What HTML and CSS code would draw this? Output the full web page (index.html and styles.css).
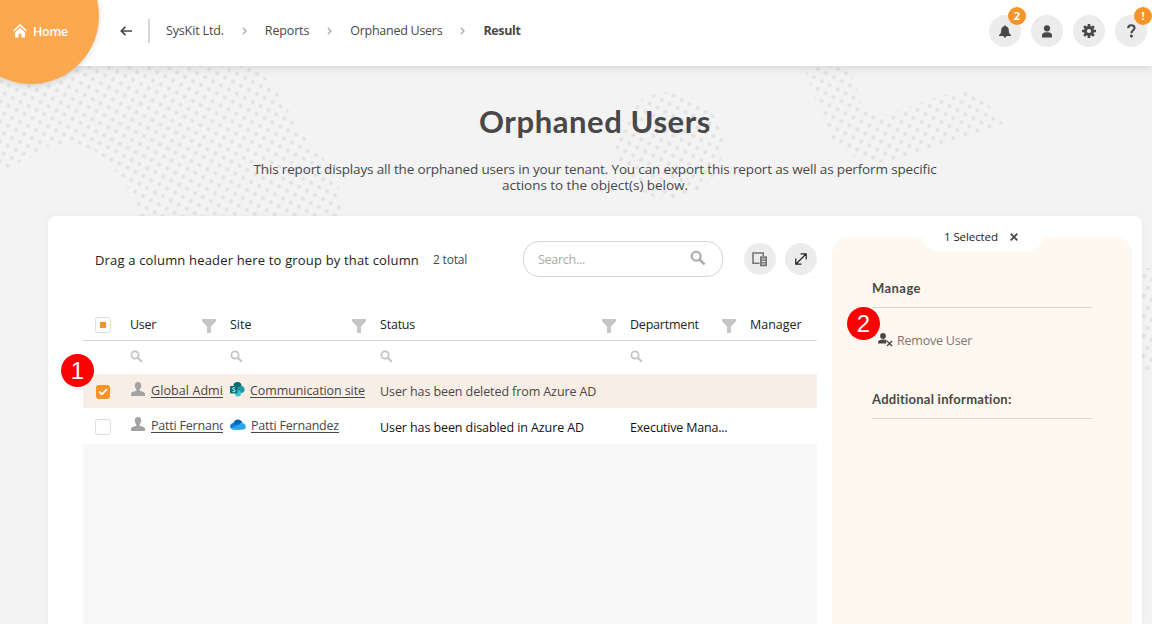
FILE: index.html
```html
<!DOCTYPE html>
<html lang="en">
<head>
<meta charset="utf-8">
<title>Orphaned Users</title>
<link rel="stylesheet" href="styles.css">
</head>
<body>
<svg class="defs" width="0" height="0" aria-hidden="true">
  <symbol id="search" viewBox="0 0 14 14"><circle cx="5.4" cy="5.4" r="3.9" fill="none" stroke="currentColor" stroke-width="1.9"/><path d="M8.3 8.3L12.8 12.6" stroke="currentColor" stroke-width="2.2"/></symbol>
  <symbol id="filter" viewBox="0 0 14 14"><path d="M0 0H14V2.2L9 7.5V14H5V7.500L0 2.200Z" fill="currentColor"/></symbol>
  <symbol id="chevron" viewBox="0 0 5 8"><path d="M.8 .8L4 4L.8 7.2" fill="none" stroke="currentColor" stroke-width="1.3"/></symbol>
  <symbol id="person" viewBox="0 0 14 14"><path d="M7 0C9 0 10.2 1.400 10.200 3.500C10.200 5 9.500 6.600 8.600 7.400V8.600C9.500 9.600 14 9.600 14 12V14H0V12C0 9.600 4.500 9.600 5.400 8.600V7.400C4.500 6.600 3.800 5 3.800 3.500C3.800 1.400 5 0 7 0Z" fill="currentColor"/></symbol>
</svg>
<svg class="backdrop" viewBox="0 0 1152 624" aria-hidden="true">
  <defs>
    <pattern id="dotsA" width="20" height="20" patternUnits="userSpaceOnUse" patternTransform="translate(10.700 95.700) rotate(1)">
      <g fill="#e2e2e2"><circle cx="2" cy="2" r="2"/><circle cx="10" cy="6" r="2"/><circle cx="18" cy="10" r="2"/><circle cx="6" cy="14" r="2"/><circle cx="14" cy="18" r="2"/></g>
    </pattern>
    <pattern id="dotsB" width="20" height="20" patternUnits="userSpaceOnUse" patternTransform="translate(963.700 92.300) rotate(.5)">
      <g fill="#e2e2e2"><circle cx="2" cy="2" r="2"/><circle cx="10" cy="6" r="2"/><circle cx="18" cy="10" r="2"/><circle cx="6" cy="14" r="2"/><circle cx="14" cy="18" r="2"/></g>
    </pattern>
  </defs>
  <path fill="url(#dotsA)" d="M0 60H252L280 96L302 134L322 156L338 185L345 220H141L134 196L122 180L110 163L95 151L72 143L50 145L30 158L6 168L0 165Z"/>
  <circle fill="url(#dotsB)" cx="669.500" cy="145.500" r="53.500"/>
  <path fill="url(#dotsB)" d="M803 60H846L853 78L861 102L874 114L886 115L940 96L966 91L988 104L1003 124L895 160L878 163L855 158L835 143L825 128L818 106L810 84Z"/>
  <path fill="url(#dotsB)" d="M1140 268H1152V374H1140Z"/>
</svg>
<header class="topbar">
  <a class="home"><svg width="14" height="14" viewBox="0 0 14 14"><path d="M.6 7L7 1L13.400 7" fill="none" stroke="#fff" stroke-width="1.700"/><path d="M2 8.300L7 3.700L12 8.300V13.500H8.500V9.800H5.500V13.500H2Z" fill="#fff"/></svg><span class="home-label">Home</span></a>
  <nav class="crumbs">
    <svg class="back" width="12" height="10" viewBox="0 0 12 10"><path d="M5.400 .8L1.300 5L5.400 9.200M1.500 5H12" fill="none" stroke="#484848" stroke-width="1.700"/></svg>
    <i class="rule"></i>
    <span class="crumb">SysKit Ltd.</span><svg class="chev"><use href="#chevron"/></svg>
    <span class="crumb">Reports</span><svg class="chev"><use href="#chevron"/></svg>
    <span class="crumb tight">Orphaned Users</span><svg class="chev"><use href="#chevron"/></svg>
    <b class="crumb current">Result</b>
  </nav>
  <div class="actions">
    <span class="round"><svg width="12" height="13" viewBox="0 0 12 13"><path d="M6 0L7 1.200C9 1.800 9.800 3.400 9.800 5.500C9.800 8 10.500 9 12 10V11H7.500C7.300 12.200 6.800 12.600 6 12.600S4.700 12.200 4.500 11H0V10C1.500 9 2.200 8 2.200 5.500C2.200 3.400 3 1.800 5 1.200Z" fill="#484848"/></svg><em class="badge">2</em></span>
    <span class="round"><svg width="10" height="13" viewBox="0 0 10 13"><circle cx="5" cy="3.300" r="3.100" fill="#484848"/><path d="M0 12.500V10.500C0 8 2.500 7.300 5 7.300S10 8 10 10.500V12.500Z" fill="#484848"/></svg></span>
    <span class="round"><svg width="14" height="14" viewBox="-7 -7 14 14"><g fill="none" stroke="#484848"><circle r="3.600" stroke-width="3"/><path stroke-width="2.600" d="M0-4V-7M0 4V7M4 0H7M-4 0H-7M3-3L4.900-4.900M-3-3L-4.900-4.900M3 3L4.900 4.900M-3 3L-4.900 4.900"/></g></svg></span>
    <span class="round"><svg width="9" height="14" viewBox="0 0 9 14"><path d="M1.200 4.200C1.200 2.100 2.500 1.200 4.300 1.200C6.300 1.200 7.500 2.300 7.500 3.900C7.500 6.300 4.400 6.200 4.400 9.300" fill="none" stroke="#484848" stroke-width="2.100"/><circle cx="4.400" cy="12.100" r="1.500" fill="#484848"/></svg><em class="badge">!</em></span>
  </div>
</header>
<section class="intro">
  <h1>Orphaned Users</h1>
  <p>This report displays all the orphaned users in your tenant. You can export this report as well as perform specific<br><span class="line2">actions to the object(s) below.</span></p>
</section>
<main class="card">
  <section class="report">
    <div class="tools">
      <span class="drag">Drag a column header here to group by that column</span>
      <span class="total">2 total</span>
      <label class="searchbox"><span class="tight">Search...</span><svg width="16" height="16"><use href="#search"/></svg></label>
      <span class="round"><svg width="16" height="16" viewBox="0 0 16 16"><path d="M7.500 12.200H1V2H11.200V5" fill="none" stroke="#777" stroke-width="1.600"/><path d="M8 5.300H15V15.300H8Z" fill="#777"/><path d="M9.800 8H13.300M9.800 10.500H13.300M9.800 13H13.300" stroke="#ececec" stroke-width="1"/></svg></span>
      <span class="round expand"><svg width="12" height="12" viewBox="0 0 12 12"><path d="M1 11L11 1M5.500 .8H11.200V6.500M.8 5.500V11.200H6.500" fill="none" stroke="#222" stroke-width="1.200"/></svg></span>
    </div>
    <div class="row head">
      <div class="cell pick"><i class="box partial"></i></div>
      <div class="cell"><span class="tight">User</span><svg class="fl"><use href="#filter"/></svg></div>
      <div class="cell"><span>Site</span><svg class="fl"><use href="#filter"/></svg></div>
      <div class="cell"><span class="snug">Status</span><svg class="fl"><use href="#filter"/></svg></div>
      <div class="cell"><span class="snug">Department</span><svg class="fl"><use href="#filter"/></svg></div>
      <div class="cell"><span>Manager</span></div>
    </div>
    <div class="row filters">
      <div class="cell"></div><div class="cell"><svg class="mag"><use href="#search"/></svg></div><div class="cell"><svg class="mag"><use href="#search"/></svg></div><div class="cell"><svg class="mag"><use href="#search"/></svg></div><div class="cell"><svg class="mag"><use href="#search"/></svg></div><div class="cell"></div>
    </div>
    <div class="row selected">
      <div class="cell pick"><i class="box checked"><svg width="10" height="8" viewBox="0 0 10 8"><path d="M1 3.500L4 6.300L9 1.200" fill="none" stroke="#fff" stroke-width="1.800"/></svg></i></div>
      <div class="cell who"><svg class="ava"><use href="#person"/></svg><a class="clip wide">Global Admi</a></div>
      <div class="cell who"><svg class="app" width="15" height="15" viewBox="0 0 15 15"><circle cx="7.500" cy="4" r="4" fill="#036c70"/><circle cx="11" cy="7.500" r="3.600" fill="#1a9ba1"/><circle cx="8" cy="11.500" r="3" fill="#37c6d0"/><rect y="4" width="7.500" height="7.500" rx=".8" fill="#03787c"/><path d="M5 6C4.300 5.400 2.700 5.500 2.700 6.600C2.700 7.800 5.100 7.400 5.100 8.700C5.100 9.900 3.200 10 2.500 9.300" fill="none" stroke="#fff" stroke-width=".9"/></svg><a class="clip near">Communication site</a></div>
      <div class="cell near">User has been deleted from Azure AD</div>
      <div class="cell"></div><div class="cell"></div>
    </div>
    <div class="row second">
      <div class="cell pick"><i class="box"></i></div>
      <div class="cell who"><svg class="ava"><use href="#person"/></svg><a class="clip snug">Patti Fernandez</a></div>
      <div class="cell who"><svg class="app" width="16" height="11" viewBox="0 0 16 11"><path d="M3.300 4.200C4.500 0 10 -.9 12.300 3.400L8 8Z" fill="#0364b8"/><path d="M3.500 10.500C-1 10.500-1 4.300 3.500 4C5.500 3.800 7.500 5 9 6L12 10.500Z" fill="#0f78d4"/><path d="M9 5.500C10.500 3 15.500 3.700 15.800 7.400C16 9.300 14.700 10.500 13 10.500H3.500C1.900 10.500 1 9.800 .6 9Z" fill="#28a8ea"/></svg><a class="clip snug">Patti Fernandez</a></div>
      <div class="cell value near">User has been disabled in Azure AD</div>
      <div class="cell value snug">Executive Mana...</div><div class="cell"></div>
    </div>
    <div class="empty"></div>
  </section>
  <aside class="panel">
    <div class="tab"><span class="near">1 Selected</span><svg width="8" height="8" viewBox="0 0 8 8"><path d="M.7 .7L7.300 7.300M7.300 .7L.7 7.300" stroke="#484848" stroke-width="1.800"/></svg></div>
    <h2 class="manage">Manage</h2>
    <div class="remove"><svg width="15" height="14" viewBox="0 0 15 14"><circle cx="5" cy="3" r="2.900" fill="#484848"/><path d="M0 10.600V9.500C0 7.500 2 6.600 5 6.600C7 6.600 8.400 7 9.200 7.800L8 9L8.500 10.600Z" fill="#484848"/><path d="M9 8L14 13M14 8L9 13" stroke="#484848" stroke-width="1.400"/></svg><span class="snug">Remove User</span></div>
    <h2>Additional information:</h2>
  </aside>
</main>
<div class="marker one">1</div>
<div class="marker two">2</div>
</body>
</html>
```
FILE: styles.css
```css
* { box-sizing: border-box; }
body { margin: 0; width: 1152px; height: 624px; overflow: hidden; position: relative; background: #f3f3f3; color: #484848; font-family: "Open Sans", "Noto Sans", sans-serif; font-size: 12.5px; white-space: nowrap; }
.defs { position: absolute; }
.backdrop { position: absolute; inset: 0; width: 1152px; height: 624px; }
svg { flex: none; }
.near { letter-spacing: -.09px; }
.snug { letter-spacing: -.21px; }
.tight { letter-spacing: -.27px; }
.wide { letter-spacing: .09px; }
.topbar { position: relative; height: 66px; background: #fff; box-shadow: 0 1px 10px rgba(0,0,0,.14); display: flex; justify-content: space-between; }
.home { position: absolute; left: -37px; top: -52px; width: 136px; height: 136px; border-radius: 50%; background: #fca84e; box-shadow: 0 2px 6px rgba(0,0,0,.13); color: #fff; display: flex; align-items: center; gap: 6px; padding: 30px 0 0 50px; font-weight: 600; }
.home-label { letter-spacing: -.29px; }
.crumbs { display: flex; align-items: center; padding-left: 120px; height: 61px; }
.crumb { letter-spacing: -.15px; }
.crumb.tight { letter-spacing: -.26px; }
.crumb.current { letter-spacing: -.36px; }
.rule { width: 2px; height: 24px; background: #d6d6d6; margin: 0 16px; }
.chev { width: 5px; height: 8px; color: #aaa; margin: 0 18px 0 18px; }
.actions { display: flex; gap: 10px; padding: 15px 5px 0 0; }
.round { position: relative; width: 32px; height: 32px; border-radius: 50%; background: #ececec; display: flex; align-items: center; justify-content: center; flex: none; }
.badge { position: absolute; left: 19px; top: -8px; width: 18px; height: 18px; border-radius: 50%; background: #f79428; color: #fff; font: 700 11px/18px "Open Sans", sans-serif; text-align: center; }
.intro { position: relative; height: 150px; padding: 36px 0 0 38px; text-align: center; }
h1 { margin: 0; font: 700 31px/38px Lato, sans-serif; letter-spacing: .57px; }
p { margin: 21px 0 0; font-size: 13.500px; line-height: 16px; letter-spacing: -.152px; }
.line2 { letter-spacing: -.035px; }
.card { position: relative; width: 1094px; height: 408px; margin-left: 48px; background: #fff; border-radius: 8px 8px 0 0; box-shadow: 0 0 6px rgba(0,0,0,.05); padding: 21px 10px 0 35px; display: flex; justify-content: space-between; }
.report { width: 734px; display: flex; flex-direction: column; }
.tools { display: flex; align-items: center; height: 44px; padding-left: 12px; color: #000; }
.drag { width: 324px; font-size: 13px; letter-spacing: .169px; color: #222; padding-top: 2px; }
.total { width: 34px; font-size: 12px; letter-spacing: -.2px; margin-left: 14px; color: #484848; }
.searchbox { width: 200px; height: 36px; margin: 0 21px 0 56px; border: 1px solid #d4d4d4; border-radius: 16px; display: flex; align-items: center; justify-content: space-between; padding: 0 16px 0 14px; color: #aaa; }
.searchbox svg { margin-bottom: 2px; }
.expand { margin-left: 9px; }
.row { display: grid; grid-template-columns: 40px 100px 150px 250px 120px 74px; }
.cell { display: flex; align-items: center; padding-left: 7px; min-width: 0; }
.head { height: 60px; padding-top: 28px; border-bottom: 1px solid #d4d4d4; color: #222; }
.head .cell { justify-content: space-between; padding-right: 7px; }
.fl { width: 14px; height: 14px; color: #c6c6c6; margin-top: 2px; }
.mag { width: 13px; height: 13px; color: #c4c4c4; margin: 0 0 3px -.5px; }
.filters { height: 33px; }
.selected { height: 34px; background: #f9eee5; }
.second { height: 36px; color: #111; }
.value { padding-top: 2px; }
.empty { flex: 1; background: #f8f8f8; }
.cell.pick { padding-left: 12px; }
.box { width: 16px; height: 16px; border: 1px solid #ddd; border-radius: 3px; background: #fff; display: flex; align-items: center; justify-content: center; }
.partial::before { content: ""; width: 6px; height: 6px; background: #f79428; }
.checked { width: 14px; height: 14px; margin: 2px 0 0 1px; background: #f79428; border: 0; }
.second .box { margin-top: 2px; }
.who { color: #484848; }
.ava { width: 14px; height: 14px; margin: 0 6px 4px 1px; color: #a3a3a3; }
.app { margin-right: 5px; margin-bottom: 3px; }
.clip { overflow: hidden; border-bottom: 1px solid #484848; height: 15px; line-height: 15px; margin-bottom: 2px; }
.panel { width: 300px; background: #fff8f1; border-radius: 16px 16px 0 0; padding: 0 40px; }
.tab { width: 121px; height: 28px; margin: -14px 0 0 50px; background: #fff; border-radius: 0 0 15px 15px; display: flex; align-items: center; gap: 12px; padding-left: 22px; font-size: 11.500px; line-height: 16px; color: #222; }
h2 { margin: 29px 0 0; height: 28px; border-bottom: 1px solid #d6d6d6; font: 700 13px/17px Lato, sans-serif; letter-spacing: .246px; }
.manage { letter-spacing: .44px; }
.remove { display: flex; align-items: center; gap: 4px; height: 18px; margin: 23px 0 0 6px; color: #777; }
.remove + h2 { margin-top: 42px; }
.marker { position: absolute; width: 33px; height: 33px; border-radius: 50%; background: #f00; color: #fff; font: 24px/33px "Liberation Sans", sans-serif; text-align: center; }
.one { left: 61px; top: 354px; }
.two { left: 847px; top: 307px; }
```
